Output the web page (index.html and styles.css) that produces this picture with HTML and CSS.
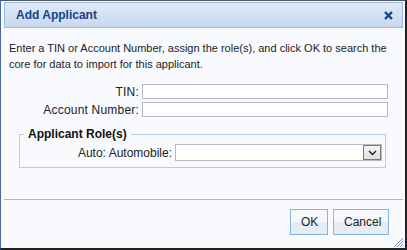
FILE: index.html
```html
<!DOCTYPE html>
<html lang="en">

<head>
    <meta charset="UTF-8">
    <title>Add Applicant</title>
    <link rel="stylesheet" href="styles.css">
</head>

<body>
    <div class="window">
        <div class="window-header">
            <span class="window-title">Add Applicant</span>
            <span class="window-close">
                <svg width="9" height="9" viewBox="0 0 9 9"><path d="M1 1 L8 8 M8 1 L1 8" stroke="#15428b" stroke-width="2.4"/></svg>
            </span>
        </div>
        <div class="window-body">
            <p class="intro">Enter a TIN or Account Number, assign the role(s), and click OK to search the<br>core for data to import for this applicant.</p>

            <div class="form-row">
                <label for="tin">TIN:</label>
                <input type="text" id="tin" name="tin">
            </div>
            <div class="form-row">
                <label for="account">Account Number:</label>
                <input type="text" id="account" name="account">
            </div>

            <fieldset class="roles">
                <legend>Applicant Role(s)</legend>
                <div class="form-row role-row">
                    <label for="auto">Auto: Automobile:</label>
                    <div class="combo">
                        <input type="text" id="auto" name="auto">
                        <span class="combo-trigger">
                            <svg width="9" height="6" viewBox="0 0 9 6"><path d="M1 1 L4.5 4.5 L8 1" fill="none" stroke="#222" stroke-width="1.4"/></svg>
                        </span>
                    </div>
                </div>
            </fieldset>
        </div>
        <div class="window-footer">
            <button type="button" class="btn btn-ok">OK</button>
            <button type="button" class="btn btn-cancel">Cancel</button>
        </div>
        <span class="resize-grip">
            <svg width="11" height="11" viewBox="0 0 11 11"><path d="M10 1 L1 10 M10 4 L4 10 M10 7 L7 10" stroke="#6f8fc2" stroke-width="1"/></svg>
        </span>
    </div>
</body>

</html>
```

FILE: styles.css
```css
/* ext-style dialog */
html, body {
    margin: 0;
    padding: 0;
}

body {
    font-family: "Liberation Sans", Arial, sans-serif;
    font-size: 12px;
    color: #222;
    background: #fff;
}

.window {
    position: relative;
    box-sizing: border-box;
    width: 407px;
    height: 250px;
    border-top: 1px solid #555;
    border-left: 1px solid #4767a8;
    border-right: 2px solid #222;
    border-bottom: 2px solid #222;
    background: #f8fafd;
    padding: 1px 2px 0 3px;
    display: flex;
    flex-direction: column;
}

.window-header {
    height: 24px;
    display: flex;
    align-items: center;
    justify-content: space-between;
    padding: 0 9px 0 11px;
    border: 1px solid #99bbe8;
    background: linear-gradient(#e1e9f7, #c8d8ef);
}

.window-title {
    font-weight: bold;
    font-size: 12px;
    color: #15428b;
}

.window-close {
    display: flex;
}

.window-body {
    flex: 1;
    padding: 0 15px 0 5px;
}

.intro {
    margin: 12px 0;
    font-size: 11px;
    line-height: 16px;
    white-space: nowrap;
}

.form-row {
    display: flex;
    align-items: center;
    margin-bottom: 3px;
}

.form-row label {
    width: 130px;
    text-align: right;
    padding-right: 3px;
    letter-spacing: 0.2px;
}

.form-row input {
    flex: 1;
    height: 15px;
    box-sizing: border-box;
    border: 1px solid #b5b8c8;
    background: #fff;
    padding: 0 2px;
    font: inherit;
}

.roles {
    margin: 10px 2px 0 10px;
    padding: 3px 3px 6px 0;
    border: 1px solid #b5cde0;
}

.roles legend {
    font-weight: bold;
    font-size: 12px;
    color: #111;
    padding: 0 4px;
    margin-left: 4px;
}

.role-row {
    margin-bottom: 0;
}

.role-row label {
    width: 152px;
    letter-spacing: 0;
}

.combo {
    flex: 1;
    display: flex;
    height: 17px;
    box-sizing: border-box;
    border: 1px solid #b5b8c8;
    background: #fff;
}

.combo input {
    border: none;
    height: 15px;
}

.combo-trigger {
    width: 18px;
    display: flex;
    align-items: center;
    justify-content: center;
    background: linear-gradient(#f6f6f6, #dedede);
    box-shadow: inset 0 0 0 1px #7a7a7a;
}

.window-footer {
    box-sizing: border-box;
    height: 49px;
    border-top: 1px solid #99bbe8;
    display: flex;
    justify-content: flex-end;
    align-items: flex-start;
    gap: 5px;
    padding: 9px 14px 0 0;
}

.btn {
    height: 26px;
    border: 1px solid #82b6e6;
    background: linear-gradient(#f6f8fb 50%, #e6ecf5 50%);
    font-family: inherit;
    font-size: 12px;
    color: #222;
    padding: 0 10px;
}

.btn-ok {
    width: 38px;
}

.btn-cancel {
    width: 56px;
}

.resize-grip {
    position: absolute;
    right: 1px;
    bottom: 0;
    width: 11px;
    height: 11px;
}
```
